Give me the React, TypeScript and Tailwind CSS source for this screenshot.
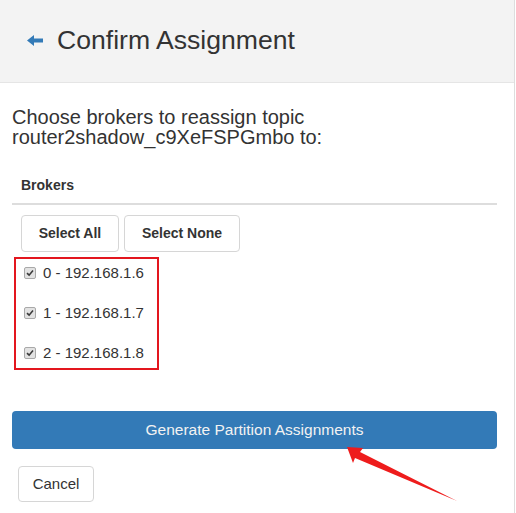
import React from 'react';

const brokers = ['0 - 192.168.1.6', '1 - 192.168.1.7', '2 - 192.168.1.8'];

function CheckedBox() {
  return (
    <span className="flex h-[12px] w-[12px] items-center justify-center rounded-[2px] border border-[#a9a9a9] bg-[#e2e2e2]">
      <svg width="8" height="8" viewBox="0 0 8 8">
        <path d="M1 4.2 L3.1 6.2 L7 1.6" fill="none" stroke="#3a3a3a" strokeWidth="1.6" />
      </svg>
    </span>
  );
}

export default function App() {
  return (
    <div
      className="relative h-[513px] w-[516px] overflow-hidden bg-white text-[#333]"
      style={{ fontFamily: '"Liberation Sans", Arial, sans-serif' }}
    >
      <div className="h-full w-[515px] border-r border-[#dddddd]">
        {/* Header */}
        <div className="flex h-[83px] items-center border-b border-[#e5e5e5] bg-[#f3f3f3] pl-[27px] pb-[2px]">
          <svg width="16" height="11" viewBox="0 0 16 11" className="mr-[14px]">
            <path d="M0 5.5 L7 0 L7 3.5 L16 3.5 L16 7.5 L7 7.5 L7 11 Z" fill="#337ab7" />
          </svg>
          <h1 className="text-[26.6px] leading-none">Confirm Assignment</h1>
        </div>

        {/* Body */}
        <div className="w-[497px] pl-3 pt-[24px]">
          <p className="text-[20px] leading-[20px]">
            Choose brokers to reassign topic
            <br />
            router2shadow_c9XeFSPGmbo to:
          </p>

          <div className="mt-[20px] w-[485px] border-b-2 border-[#dddddd] px-[9px] py-[8px] text-[14px] font-bold leading-[20px]">
            Brokers
          </div>

          <div className="ml-[9px] mt-[10px] flex gap-[5px]">
            <button className="h-[37px] w-[98px] rounded-[4px] border border-[#d6d6d6] bg-white text-[14px] font-bold text-[#333]">
              Select All
            </button>
            <button className="h-[37px] w-[116px] rounded-[4px] border border-[#d6d6d6] bg-white text-[14px] font-bold text-[#333]">
              Select None
            </button>
          </div>

          <div className="ml-[2px] mt-[5px] flex w-[145px] flex-col gap-[16px] border-2 border-[#e3161e] pb-[3px] pl-[8px] pt-[2px]">
            {brokers.map((b) => (
              <label key={b} className="flex h-[24px] items-center gap-[7px] text-[15px]">
                <CheckedBox />
                <span>{b}</span>
              </label>
            ))}
          </div>

          <button className="mt-[41px] flex h-[38px] w-[485px] items-center justify-center rounded-[4px] bg-[#337ab7] text-[15.5px] text-[#f2f2f2]">
            Generate Partition Assignments
          </button>

          <button className="ml-[6px] mt-[17px] h-[36px] w-[76px] rounded-[4px] border border-[#d6d6d6] bg-white text-[15px] text-[#333]">
            Cancel
          </button>
        </div>
      </div>

      {/* Annotation arrow */}
      <svg className="pointer-events-none absolute left-0 top-0" width="516" height="513">
        <polygon points="347,447 363,448 360,452 457,501 355,458 353,463" fill="#ee1c1c" />
      </svg>
    </div>
  );
}
